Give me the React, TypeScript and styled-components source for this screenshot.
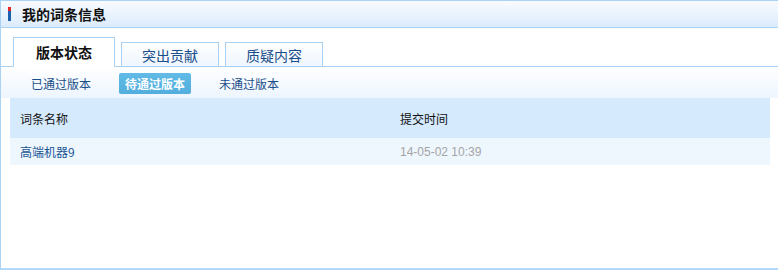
import * as React from "react";
import styled, { createGlobalStyle } from "styled-components";

const GlobalStyle = createGlobalStyle`
  html, body {
    margin: 0;
    padding: 0;
    background: #fff;
  }
  body {
    font-family: "Noto Sans CJK SC", "Liberation Sans", sans-serif;
    font-size: 12px;
  }
`;

const Panel = styled.div`
  width: 778px;
  height: 270px;
  box-sizing: border-box;
  border-left: 1px solid #a9d2f5;
  border-bottom: 2px solid #b4d8f7;
  background: #fff;
  display: flex;
  flex-direction: column;
`;

const Header = styled.div`
  height: 28px;
  box-sizing: border-box;
  border-top: 1px solid #a9d2f5;
  border-bottom: 1px solid #a9d2f5;
  background: linear-gradient(#f8fbff, #dbebfc);
  display: flex;
  align-items: center;
  padding-left: 7px;
`;

const Marker = styled.span`
  width: 3px;
  height: 14px;
  margin-right: 11px;
  background: linear-gradient(#e8262a 0, #e8262a 28%, #1c5fb0 28%, #1c5fb0 100%);
`;

const Title = styled.h2`
  margin: 0;
  font-size: 14px;
  font-weight: bold;
  color: #111;
  line-height: 1;
`;

const TabStrip = styled.div`
  height: 39px;
  box-sizing: border-box;
  padding-left: 12px;
  border-bottom: 1px solid #a9d2f5;
  display: flex;
  align-items: flex-end;
  gap: 6px;
`;

const Tab = styled.div<{ $active?: boolean }>`
  box-sizing: border-box;
  width: ${(p) => (p.$active ? "102px" : "98px")};
  height: ${(p) => (p.$active ? "30px" : "24px")};
  margin-bottom: ${(p) => (p.$active ? "-1px" : "0")};
  border: 1px solid #a9d2f5;
  border-bottom: ${(p) => (p.$active ? "none" : "0")};
  background: ${(p) => (p.$active ? "#fff" : "linear-gradient(#ffffff, #eef6fe)")};
  display: flex;
  align-items: center;
  justify-content: center;
  font-size: 14px;
  font-weight: ${(p) => (p.$active ? "bold" : "normal")};
  color: ${(p) => (p.$active ? "#111" : "#1a4e8a")};
  padding-bottom: ${(p) => (p.$active ? "2px" : "0")};
`;

const SubNav = styled.div`
  height: 31px;
  box-sizing: border-box;
  background: linear-gradient(#ffffff, #edf5fe);
  display: flex;
  align-items: center;
  padding-left: 30px;
  padding-top: 1px;
  gap: 28px;
`;

const SubLink = styled.span<{ $active?: boolean }>`
  display: inline-flex;
  align-items: center;
  justify-content: center;
  height: 21px;
  padding: 0 ${(p) => (p.$active ? "6px" : "0")};
  border-radius: 2px;
  color: ${(p) => (p.$active ? "#fff" : "#1a4e8a")};
  font-weight: ${(p) => (p.$active ? "bold" : "normal")};
  background: ${(p) => (p.$active ? "linear-gradient(#62bbe6, #52aedd)" : "transparent")};
`;

const Table = styled.div`
  margin: 0 8px 0 9px;
  display: grid;
  grid-template-columns: 380px 1fr;
`;

const Cell = styled.div<{ $head?: boolean; $muted?: boolean }>`
  height: ${(p) => (p.$head ? "39px" : "27px")};
  display: flex;
  align-items: center;
  padding-left: 10px;
  padding-top: ${(p) => (p.$head ? "1px" : "0")};
  background: ${(p) => (p.$head ? "#d6eafd" : "#eef6fe")};
  color: ${(p) => (p.$head ? "#111" : p.$muted ? "#a5a5a5" : "#1a5494")};
  font-family: ${(p) => (p.$muted ? '"Liberation Sans", sans-serif' : "inherit")};
`;

export default function App() {
  return (
    <>
      <GlobalStyle />
      <Panel>
        <Header>
          <Marker />
          <Title>我的词条信息</Title>
        </Header>
        <TabStrip>
          <Tab $active>版本状态</Tab>
          <Tab>突出贡献</Tab>
          <Tab>质疑内容</Tab>
        </TabStrip>
        <SubNav>
          <SubLink>已通过版本</SubLink>
          <SubLink $active>待通过版本</SubLink>
          <SubLink>未通过版本</SubLink>
        </SubNav>
        <Table>
          <Cell $head>词条名称</Cell>
          <Cell $head>提交时间</Cell>
          <Cell>高端机器9</Cell>
          <Cell $muted>14-05-02 10:39</Cell>
        </Table>
      </Panel>
    </>
  );
}
